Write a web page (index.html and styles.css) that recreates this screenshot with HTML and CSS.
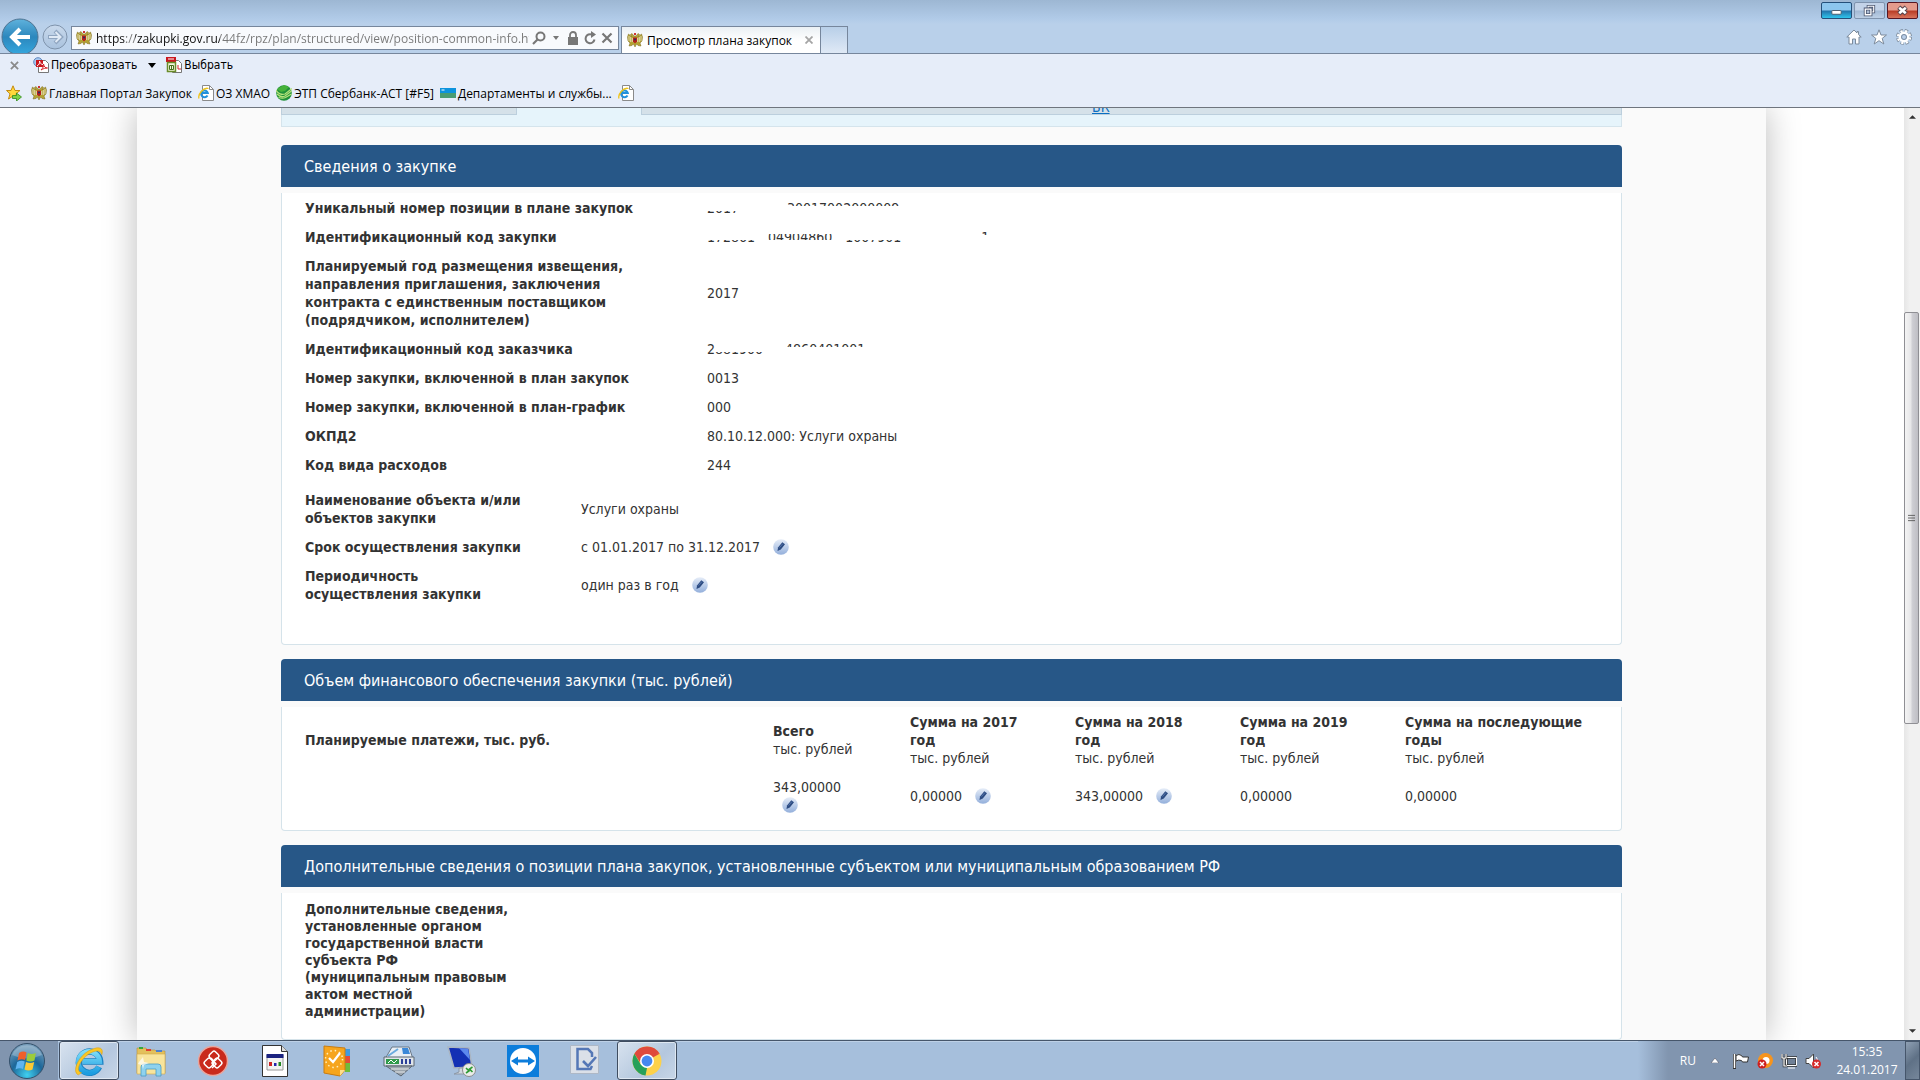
FILE: index.html
```html
<!DOCTYPE html>
<html lang="ru">
<head>
<meta charset="utf-8">
<title>Просмотр плана закупок</title>
<link rel="stylesheet" href="styles.css">
</head>
<body>
<svg class="defs" aria-hidden="true">
  <defs>
    <linearGradient id="gBack" x1="0" y1="0" x2="0" y2="1"><stop offset="0" stop-color="#5fb2dc"/><stop offset=".5" stop-color="#2c87bd"/><stop offset="1" stop-color="#35a8df"/></linearGradient>
    <linearGradient id="gFwd" x1="0" y1="0" x2="0" y2="1"><stop offset="0" stop-color="#c9d9ec"/><stop offset="1" stop-color="#a9c2de"/></linearGradient>
    <linearGradient id="gPen" x1="0" y1="0" x2="0" y2="1"><stop offset="0" stop-color="#e6edf8"/><stop offset="1" stop-color="#93afdb"/></linearGradient>
    <radialGradient id="gOrb" cx=".5" cy=".9" r=".9"><stop offset="0" stop-color="#3fd0f0"/><stop offset=".5" stop-color="#1c6799"/><stop offset="1" stop-color="#7fa3bf"/></radialGradient>
    <linearGradient id="gE" x1="0" y1="0" x2="0" y2="1"><stop offset="0" stop-color="#7fdcf8"/><stop offset="1" stop-color="#1d9de0"/></linearGradient>
    <symbol id="eagle" viewBox="0 0 16 16">
      <path d="M7 4 5 1.500 3.500 2.500 5 5 1.500 2 .5 5 1 9 3 11 2 14 5 13.500 6.500 12 8 15 9.500 12 11 13.500 14 14 13 11 15 9 15.500 5 14.500 2 11 5 12.500 2.500 11 1.500 9 4Z" fill="#b4a234" stroke="#7a681c" stroke-width=".5"/>
      <path d="M2 4v5M3.700 5v5M14 4v5M12.300 5v5M5.300 6v4M10.700 6v4" stroke="#fff" stroke-width=".6"/>
      <path d="M6 5.500h4v4L8 11.500 6 9.500Z" fill="#b3211c"/><path d="M7 1h2v2H7Z" fill="#c33"/><circle cx="8" cy="7.500" r="1" fill="#20306a"/>
    </symbol>
    <symbol id="iedoc" viewBox="0 0 16 16">
      <path d="M4.500.5h7l4 4v11h-11Z" fill="#fff" stroke="#8a8a8a"/><path d="M11.500.5v4h4" fill="none" stroke="#8a8a8a"/>
      <path d="M9.500 10.500A3.400 3.400 0 1 1 9.800 8H4" fill="none" stroke="#2191dc" stroke-width="2"/>
      <path d="M1 13.500C-.5 9 6 2 10.500 3.500" fill="none" stroke="#f0c419" stroke-width="1.300"/>
    </symbol>
    <symbol id="pen" viewBox="0 0 16 16">
      <circle cx="8" cy="8" r="7.800" fill="url(#gPen)"/><path d="M4.500 12 5 8.500 9.300 3.200 12 5.300 7.800 10.500Z" fill="#2d4c82"/><path d="M6.500 8.500 10 4.500" stroke="#5f7fb4" stroke-width=".8"/>
    </symbol>
    <symbol id="ie" viewBox="0 0 30 30">
      <path d="M24.500 20.500A10 10 0 1 1 25.500 15.500H9" fill="none" stroke="#1b83c4" stroke-width="6"/>
      <path d="M24 20.500A10 10 0 1 1 25 15.500H9" fill="none" stroke="url(#gE)" stroke-width="4.600"/>
      <path d="M5 28C-2 25 6 8 18 4 25 1 29 3 27 9 26 4 20 5 14 9 6 15 2 25 8 26Z" fill="#fbc724" stroke="#d99a10" stroke-width=".5"/>
    </symbol>
  </defs>
</svg>

<header class="frame">
  <div class="nav">
    <div class="history">
      <button class="back" aria-label="Назад"><svg viewBox="0 0 38 38"><circle cx="19" cy="19" r="18" fill="url(#gBack)" stroke="#4f7391"/><path d="M29 19H12M19 11l-8 8 8 8" fill="none" stroke="#fff" stroke-width="4"/></svg></button>
      <button class="forward" aria-label="Вперёд"><svg viewBox="0 0 26 26"><circle cx="13" cy="13" r="12" fill="url(#gFwd)" stroke="#7f93ab"/><path d="M6 13h12M13 7l6 6-6 6" fill="none" stroke="#8fa5c0" stroke-width="4"/><path d="M7 13h11M13.500 8l5 5-5 5" fill="none" stroke="#dfe9f5" stroke-width="2"/></svg></button>
    </div>
    <div class="address">
      <svg class="i16"><use href="#eagle"/></svg>
      <input class="url" aria-label="Адрес" value="https://zakupki.gov.ru/44fz/rpz/plan/structured/view/position-common-info.html">
      <button class="tool search" aria-label="Поиск"><svg viewBox="0 0 14 14"><circle cx="8.500" cy="5.500" r="4" fill="none" stroke="#777" stroke-width="2"/><path d="M5.500 8.500 1 13" stroke="#777" stroke-width="2.200"/></svg></button>
      <button class="tool caret" aria-label="Список адресов"><svg viewBox="0 0 8 5"><path d="M1 0h6L4 4Z" fill="#777"/></svg></button>
      <button class="tool" aria-label="Безопасность"><svg viewBox="0 0 14 14"><path d="M2 6h10v8H2Z" fill="#777"/><path d="M4 7V4a3 3 0 0 1 6 0v3" fill="none" stroke="#777" stroke-width="1.800"/></svg></button>
      <button class="tool" aria-label="Обновить"><svg viewBox="0 0 14 14"><path d="M11.500 8.500A4.500 4.500 0 1 1 9 3.600" fill="none" stroke="#777" stroke-width="2"/><path d="M8 0v7l5-3.500Z" fill="#777"/></svg></button>
      <button class="tool" aria-label="Остановить"><svg viewBox="0 0 14 14"><path d="M2.500 2.500l9 9M11.500 2.500l-9 9" stroke="#777" stroke-width="2.200"/></svg></button>
    </div>
    <div class="tab">
      <svg class="i16"><use href="#eagle"/></svg>
      <span class="tab-title">Просмотр плана закупок</span>
      <button class="tab-close" aria-label="Закрыть вкладку"><svg viewBox="0 0 8 8"><path d="M.5.5l7 7M7.500.5l-7 7" stroke="#a5a5a5" stroke-width="1.800"/></svg></button>
    </div>
    <button class="new-tab" aria-label="Новая вкладка"></button>
    <div class="corner">
      <div class="window-buttons">
        <button class="wb min" aria-label="Свернуть"><svg viewBox="0 0 30 16"><rect x="10" y="8" width="10" height="4" rx="1" fill="#fff" stroke="#4a5a6a"/></svg></button>
        <button class="wb max" aria-label="Восстановить"><svg viewBox="0 0 30 16"><path d="M13.500 3.500h6v6h-6Z" fill="none" stroke="#4c5770" stroke-width="3"/><path d="M13.500 3.500h6v6h-6Z" fill="none" stroke="#fff" stroke-width="1.200"/><path d="M10.500 6.500h6v6h-6Z" fill="#aebfd6" stroke="#4c5770" stroke-width="3.200"/><path d="M10.500 6.500h6v6h-6Z" fill="none" stroke="#fff" stroke-width="1.400"/></svg></button>
        <button class="wb close" aria-label="Закрыть"><svg viewBox="0 0 30 16"><path d="M11 4.500l8 7M19 4.500l-8 7" stroke="#55424a" stroke-width="5"/><path d="M11.500 5l7 6M18.500 5l-7 6" stroke="#fff" stroke-width="2.800"/></svg></button>
      </div>
      <div class="commands">
        <button class="tool" aria-label="Домой"><svg viewBox="0 0 16 16"><path d="M8 1 .8 8H3v7h3.500v-5h3v5H13V8h2.200l-2.700-2.500V2.500h-1.500v1.500Z" fill="#fff" stroke="#7c8b9c"/></svg></button>
        <button class="tool" aria-label="Избранное"><svg viewBox="0 0 16 16"><path d="M8 .8 10 6h5.500l-4.300 3.400L12.800 15 8 11.700 3.200 15l1.600-5.600L.5 6H6Z" fill="#fff" stroke="#7c8b9c"/></svg></button>
        <button class="tool" aria-label="Сервис"><svg viewBox="0 0 16 16"><circle cx="8" cy="8" r="6" fill="none" stroke="#7c8b9c" stroke-width="4" stroke-dasharray="3 1.712"/><circle cx="8" cy="8" r="6" fill="none" stroke="#fff" stroke-width="2.400" stroke-dasharray="2.200 2.512" stroke-dashoffset="-.4"/><circle cx="8" cy="8" r="4.200" fill="none" stroke="#fff" stroke-width="2.400"/><circle cx="8" cy="8" r="2.500" fill="#b9cfea" stroke="#7c8b9c"/></svg></button>
      </div>
    </div>
  </div>
  <div class="bar pdf-bar">
    <button class="bar-close" aria-label="Закрыть панель"><svg viewBox="0 0 10 10"><path d="M1 1l8 8M9 1 1 9" stroke="#8a8a8a" stroke-width="2"/></svg></button>
    <button class="bar-item"><svg class="i16" viewBox="0 0 16 16"><path d="M5.500 3.500h7l3 3v9h-10Z" fill="#fff" stroke="#777"/><circle cx="5" cy="5" r="4.300" fill="#a9c8ee" stroke="#5f88c0"/><path d="M3 3h7v7H3Z" fill="#c9171e"/><path d="M4 9c2-1 3-3 2.500-5 .5 2 1.500 3.500 3.500 3.500" fill="none" stroke="#fff"/><path d="M8 13c2-2 3-4 2.500-6 .5 3 2 4 4 4-2 0-4 .5-6.500 2Z" fill="none" stroke="#d8232a"/></svg>Преобразовать</button>
    <button class="bar-caret" aria-label="Параметры преобразования"><svg viewBox="0 0 8 5"><path d="M0 0h8L4 5Z" fill="#000"/></svg></button>
    <button class="bar-item"><svg class="i16" viewBox="0 0 16 16"><path d="M6.500 3.500h6l3 3v9h-9Z" fill="#fff" stroke="#777"/><path d="M0 0h10v5H0Z" fill="#c9171e"/><path d="M2 2h6" stroke="#fff"/><path d="M1.500 5.500h8v9h-8Z" fill="#f3f7dc" stroke="#6a8c2a" stroke-width="1.500"/><path d="M3.500 8.500h4v4h-4ZM5.500 8v5" fill="none" stroke="#47701c"/><path d="M12 8v4h3" fill="none" stroke="#d8232a"/></svg>Выбрать</button>
  </div>
  <nav class="bar fav-bar">
    <button class="add-fav" aria-label="Добавить в избранное"><svg class="i16" viewBox="0 0 16 16"><path d="M7 .8 9 5.500h5l-4 3.300 1.500 5L7 11 2.500 14 4 8.800 .5 5.500H5Z" fill="#ffd83d" stroke="#c48a10"/><path d="M6.500 10.500h4v-2.500l5 4-5 4v-2.500h-4Z" fill="#7ed348" stroke="#2f8a1c" stroke-width=".8"/></svg></button>
    <a class="fav" href="#"><svg class="i16"><use href="#eagle"/></svg>Главная Портал Закупок</a>
    <a class="fav" href="#"><svg class="i16"><use href="#iedoc"/></svg>ОЗ ХМАО</a>
    <a class="fav" href="#"><svg class="i16" viewBox="0 0 16 16"><circle cx="8" cy="8" r="7.800" fill="#21913a"/><path d="M0 5C2 9 6 10 9 9L16 3.500M1 9c3 3 6 3 8 2l6.500-5M2.500 12.500c3 1 5 1 7 0L15.500 9" fill="none" stroke="#b5e27a" stroke-width="1.200"/><path d="M1 4 5 7 9 6 13 2 8 0Z" fill="#46b23a"/></svg>ЭТП Сбербанк-АСТ [#F5]</a>
    <a class="fav" href="#"><svg class="i16" viewBox="0 0 16 16"><path d="M0 3h16v5H0Z" fill="#0d93dd"/><path d="M0 8h16v5H0Z" fill="#4a9c72"/><path d="M1.500 5h3" stroke="#fff" stroke-width="1"/></svg>Департаменты и службы...</a>
    <a class="fav" href="#" aria-label="Страница"><svg class="i16"><use href="#iedoc"/></svg></a>
  </nav>
</header>

<div class="viewport">
  <main class="page">
    <div class="sheet">
      <div class="tabs">
        <div class="tabs-row"><span class="tabs-left"></span><span class="tabs-active"></span><span class="tabs-right"><a class="tabs-link" href="#">БК</a></span></div>
        <div class="tabs-foot"></div>
      </div>

      <section class="panel">
        <h2 class="panel-title">Сведения о закупке</h2>
        <div class="panel-body roomy">
          <table class="facts wide">
            <tr><th scope="row">Уникальный номер позиции в плане закупок</th><td><span class="masked"><span class="low">2017</span><span class="gap-l"></span><span class="high">30017002000009</span></span></td></tr>
            <tr><th scope="row">Идентификационный код закупки</th><td><span class="masked"><span class="low">172861</span><span class="gap-s"></span><span class="mid">04904860</span><span class="gap-s"></span><span class="low">1007901</span><span class="gap-xl"></span><span class="high">1</span></span></td></tr>
            <tr><th scope="row">Планируемый год размещения извещения, направления приглашения, заключения контракта с единственным поставщиком (подрядчиком, исполнителем)</th><td>2017</td></tr>
            <tr><th scope="row">Идентификационный код заказчика</th><td><span class="masked"><span>2</span><span class="low">881900</span><span class="gap-m"></span><span class="high">4860401001</span></span></td></tr>
            <tr><th scope="row">Номер закупки, включенной в план закупок</th><td>0013</td></tr>
            <tr><th scope="row">Номер закупки, включенной в план-график</th><td>000</td></tr>
            <tr><th scope="row">ОКПД2</th><td>80.10.12.000: Услуги охраны</td></tr>
            <tr><th scope="row">Код вида расходов</th><td>244</td></tr>
          </table>
          <table class="facts narrow">
            <tr><th scope="row">Наименование объекта и/или объектов закупки</th><td>Услуги охраны</td></tr>
            <tr><th scope="row">Срок осуществления закупки</th><td>с 01.01.2017 по 31.12.2017 <button class="pen" aria-label="История изменений"><svg><use href="#pen"/></svg></button></td></tr>
            <tr><th scope="row">Периодичность осуществления закупки</th><td>один раз в год <button class="pen" aria-label="История изменений"><svg><use href="#pen"/></svg></button></td></tr>
          </table>
        </div>
      </section>

      <section class="panel">
        <h2 class="panel-title">Объем финансового обеспечения закупки (тыс. рублей)</h2>
        <div class="panel-body">
          <table class="facts sums">
            <thead>
              <tr><th class="c-name" scope="col">Планируемые платежи, тыс. руб.</th><th class="c-total" scope="col">Всего<small>тыс. рублей</small></th><th class="c-year" scope="col">Сумма на 2017 год<small>тыс. рублей</small></th><th class="c-year" scope="col">Сумма на 2018 год<small>тыс. рублей</small></th><th class="c-year" scope="col">Сумма на 2019 год<small>тыс. рублей</small></th><th class="c-rest" scope="col">Сумма на последующие годы<small>тыс. рублей</small></th></tr>
            </thead>
            <tbody>
              <tr><td></td><td>343,00000 <button class="pen" aria-label="История изменений"><svg><use href="#pen"/></svg></button></td><td>0,00000 <button class="pen" aria-label="История изменений"><svg><use href="#pen"/></svg></button></td><td>343,00000 <button class="pen" aria-label="История изменений"><svg><use href="#pen"/></svg></button></td><td>0,00000</td><td>0,00000</td></tr>
            </tbody>
          </table>
        </div>
      </section>

      <section class="panel">
        <h2 class="panel-title">Дополнительные сведения о позиции плана закупок, установленные субъектом или муниципальным образованием РФ</h2>
        <div class="panel-body">
          <table class="facts narrow dense">
            <tr><th scope="row">Дополнительные сведения, установленные органом государственной власти субъекта РФ (муниципальным правовым актом местной администрации)</th><td></td></tr>
          </table>
        </div>
      </section>
    </div>
  </main>
  <div class="scrollbar">
    <button class="sb-arrow" aria-label="Вверх"><svg viewBox="0 0 8 4"><path d="M0 4 4 0l4 4Z" fill="#333"/></svg></button>
    <div class="sb-before"></div>
    <div class="sb-thumb"><svg viewBox="0 0 8 8"><path d="M0 1h8M0 4h8M0 7h8" stroke="#555"/></svg></div>
    <div class="sb-after"></div>
    <button class="sb-arrow" aria-label="Вниз"><svg viewBox="0 0 8 4"><path d="M0 0h8L4 4Z" fill="#333"/></svg></button>
  </div>
</div>

<footer class="taskbar">
  <button class="start" aria-label="Пуск"><svg viewBox="0 0 38 38"><circle cx="19" cy="19" r="17.500" fill="url(#gOrb)" stroke="#34506a"/><path d="M4 13a16.500 16.500 0 0 1 30 0Q19 20 4 13Z" fill="#fff" opacity=".25"/><path d="M11 11q4-2.500 7.500-.5L17 18q-3.500-1.500-7.500.5Z" fill="#f0602a"/><path d="M19.800 11q3.700 2 8 0L26.500 18.500q-4 2-8.200 0Z" fill="#9bcc3c"/><path d="M9.200 20q4-2 7.500-.5L15 27q-3.500-1.500-7.500.5Z" fill="#5fb4f0"/><path d="M18 20q4 2 8.200 0L24.500 27.500q-4 2-8 0Z" fill="#fcc934"/></svg></button>
  <div class="apps">
    <button class="app active" aria-label="Internet Explorer"><svg><use href="#ie"/></svg></button>
    <button class="app" aria-label="Проводник"><svg viewBox="0 0 32 32"><path d="M2 6V3h9l1 2h8l1 1h9v22H2Z" fill="#e3c05c" stroke="#b8923a" stroke-width=".6"/><path d="M4 3h4" stroke="#35a83a" stroke-width="2"/><path d="M11 5h5" stroke="#e04030" stroke-width="2"/><path d="M21 6h6" stroke="#4a80d0" stroke-width="2"/><path d="M2 9h28v20H2Z" fill="#f8e49c" stroke="#d1a94a" stroke-width=".6"/><path d="M6 31V22q0-3 3-3h14q3 0 3 3v9h-5v-7H11v7Z" fill="#8fd2ee" stroke="#4a9cc4" stroke-width=".8"/><path d="M4 17l4-5 1 5 5 1-5 2-1 4-1-4-4-1Z" fill="#fff" opacity=".7"/></svg></button>
    <button class="app" aria-label="Программа"><svg viewBox="0 0 32 32"><circle cx="16" cy="16" r="14.500" fill="#c92a1c" stroke="#e8a69e" stroke-width="1.500"/><g fill="none" stroke="#fff" stroke-width="1.500"><rect x="13" y="7" width="8" height="8" rx="2" transform="rotate(45 17 11)"/><rect x="8" y="14" width="8" height="8" rx="2" transform="rotate(45 12 18)"/><rect x="16" y="14" width="8" height="8" rx="2" transform="rotate(45 20 18)"/><path d="M14 13l5 6-4 4"/></g></svg></button>
    <button class="app" aria-label="Документ"><svg viewBox="0 0 32 32"><path d="M3.500.5h19l6 6v25h-25Z" fill="#fff" stroke="#333"/><path d="M22.500.5v6h6" fill="#ddd" stroke="#333"/><path d="M8 10h16v15H8Z" fill="#f2f2f2" stroke="#999"/><path d="M7.500 9h17v4h-17Z" fill="#1b2380"/><path d="M10 17h3v4h-3Z" fill="#c22"/><path d="M15 18h2.500v3H15Z" fill="#22a"/><path d="M19.500 17h2.500v4h-2.500Z" fill="#282"/></svg></button>
    <button class="app" aria-label="Планировщик"><svg viewBox="0 0 32 32"><path d="M24 4h5v7h-5Z" fill="#3f9ae0"/><path d="M24 11h5v7h-5Z" fill="#e34b3a"/><path d="M24 18h5v9h-5Z" fill="#6fbc3c"/><path d="M3 1 24 3v22l-5 6L3 28Z" fill="#f6a51d" stroke="#c97c10"/><path d="M19 31v-6l5 0" fill="#ffdf8a"/><circle cx="13" cy="14" r="8.500" fill="none" stroke="#fff0c0" stroke-width="1.500" stroke-dasharray="1.500 3"/><path d="M8 13l4 4 7-9" fill="none" stroke="#fff" stroke-width="2.200"/></svg></button>
    <button class="app" aria-label="Учёт"><svg viewBox="0 0 32 32"><path d="M9 2h17l4 12H2Z" fill="#e8eef5" stroke="#6a7888"/><path d="M19 3h6l2 6h-7Z" fill="#3b88d8"/><path d="M5 11 15 4" stroke="#6aaade" stroke-width="2"/><path d="M1 12h30v9H1Z" fill="#dfe5ea" stroke="#5c6772"/><path d="M3 14h13v5H3Z" fill="#2f9a4a"/><path d="M5 18l3-3 3 3 3-3" fill="none" stroke="#fff"/><path d="M19 14v5M23 14v5M27 14v5" stroke="#2a3f98" stroke-width="2"/><path d="M3 21h26L18 31Z" fill="#9ca5ae" stroke="#5c6772"/><path d="M8 24h18M12 27h10" stroke="#e5e8ea"/></svg></button>
    <button class="app" aria-label="Удалённый рабочий стол"><svg viewBox="0 0 32 32"><path d="M3 2l21 1 3 19-18 1Z" fill="#1330b4" stroke="#aab5c2" stroke-width="1.500"/><path d="M14 3l9 1 2 11Z" fill="#5c88ee"/><path d="M14 23h6v4l2 2H9l5-2Z" fill="#cfd6de" stroke="#8c98a6"/><circle cx="24" cy="25" r="6.500" fill="#e9ece9" stroke="#8c8c8c"/><path d="M21 28l3-2-3-3M27.500 22l-3 2 3 3" fill="none" stroke="#2c9a32" stroke-width="1.600"/></svg></button>
    <button class="app" aria-label="TeamViewer"><svg viewBox="0 0 32 32"><path d="M0 0h32v32H0Z" fill="#0c7ddb"/><circle cx="16" cy="16" r="13" fill="#fff"/><path d="M4 16l7-4.500v3h10v-3l7 4.500-7 4.500v-3H11v3Z" fill="#0c7ddb"/></svg></button>
    <button class="app" aria-label="Задачи"><svg viewBox="0 0 32 32"><path d="M1.500 .5h28v28h-28Z" fill="#dbe0e8" stroke="#aeb8c6"/><path d="M23 12V8l-4-4H8.500v20h13L23 21" fill="none" stroke="#5577b6" stroke-width="2.500"/><path d="M14 16l5 5 8-9" fill="none" stroke="#5577b6" stroke-width="2.600"/></svg></button>
    <button class="app active" aria-label="Google Chrome"><svg viewBox="0 0 32 32"><circle cx="16" cy="16" r="14.500" fill="#fdd14b"/><path d="M3.400 8.800A14.500 14.500 0 0 1 28.600 8.800L16 9.500 9.500 18Z" fill="#df4a3c"/><path d="M3.400 8.800 9.800 19.500 16 23 14.500 30.400A14.500 14.500 0 0 1 3.400 8.800Z" fill="#27a05a"/><path d="M28.600 8.800H16v7Z" fill="#df4a3c"/><circle cx="16" cy="16" r="7" fill="#fff"/><circle cx="16" cy="16" r="5.400" fill="#4688f0"/></svg></button>
  </div>
  <div class="tray">
    <span class="lang">RU</span>
    <button class="tray-up" aria-label="Скрытые значки"><svg viewBox="0 0 8 5"><path d="M0 5 4 0l4 5Z" fill="#fff" stroke="#445" stroke-width=".5"/></svg></button>
    <svg class="i16" viewBox="0 0 16 16"><path d="M1.500 1v15" stroke="#333" stroke-width="3"/><path d="M3 2.500q3-2 5.500 0l1 1.500h6l-1 5h-5l-1-1.500q-3-1-5.500.5Z" fill="#fff" stroke="#333"/><path d="M1.500 1v14" stroke="#fff" stroke-width="1.500"/></svg>
    <svg class="i16" viewBox="0 0 16 16"><circle cx="8.500" cy="7.500" r="7.500" fill="#f7941d"/><circle cx="9" cy="7.500" r="3.500" fill="#fff"/><circle cx="5" cy="11" r="4.500" fill="#cf1f1f"/><path d="M3 9l4 4M7 9l-4 4" stroke="#fff" stroke-width="1.500"/></svg>
    <svg class="i16" viewBox="0 0 16 16"><path d="M5.500 4.500h10v8h-10Z" fill="#6f8096" stroke="#333" stroke-width="2.500"/><path d="M5.500 4.500h10v8h-10ZM7 15h7" fill="none" stroke="#fff"/><path d="M1 1v4h4V1M3 5v8h3" fill="none" stroke="#333" stroke-width="2.500"/><path d="M1 1v4h4V1M3 5v8h3" fill="none" stroke="#fff" stroke-width="1.200"/></svg>
    <svg class="i16" viewBox="0 0 16 16"><path d="M1 5.500h3L8.500 1v14L4 10.500H1Z" fill="#fff" stroke="#444"/><path d="M11 4q2 2 1 4" fill="none" stroke="#fff"/><circle cx="11.500" cy="11" r="4.500" fill="#d62a2a"/><path d="M9.500 9l4 4M13.500 9l-4 4" stroke="#fff" stroke-width="1.500"/></svg>
    <time class="clock"><span>15:35</span><span>24.01.2017</span></time>
  </div>
  <button class="show-desktop" aria-label="Свернуть все окна"></button>
</footer>
</body>
</html>
```
FILE: styles.css
```css
* { box-sizing: border-box; }

body {
  margin: 0;
  height: 100vh;
  display: flex;
  flex-direction: column;
  overflow: hidden;
  background: #fff;
  font-family: "Open Sans", "Noto Sans", sans-serif;
  font-size: 12px;
  color: #000;
}

button {
  margin: 0;
  padding: 0;
  border: 0;
  background: none;
  font: inherit;
  color: inherit;
}

svg { display: block; }
.defs { position: absolute; width: 0; height: 0; }
.i16 { width: 16px; height: 16px; flex: none; }

/* Browser frame */
.frame {
  flex: none;
  background: #e6edf9;
  border-bottom: 1px solid #6f757e;
}

.nav {
  display: flex;
  align-items: flex-end;
  height: 54px;
  background: linear-gradient(#9db7d3, #b0cae7 18px, #b9d0ea 24px);
  border-bottom: 1px solid #76869c;
}

.history {
  display: flex;
  align-items: flex-start;
  gap: 3px;
  width: 71px;
  height: 35px;
  padding-left: 1px;
  overflow: hidden;
}
.back svg { width: 38px; height: 38px; }
.forward { padding-top: 6px; }
.forward svg { width: 26px; height: 26px; }

.address {
  display: flex;
  align-items: center;
  gap: 3px;
  width: 548px;
  height: 24px;
  margin-bottom: 3px;
  padding: 0 4px;
  background: #f8fafd;
  border: 1px solid #76869c;
}
.url {
  flex: 1;
  min-width: 0;
  margin-left: 1px;
  padding: 0;
  border: 0;
  outline: 0;
  font: inherit;
  color: transparent;
  background: linear-gradient(90deg, #111 29px, #777 29px, #777 39px, #111 39px, #111 124px, #777 124px);
  -webkit-background-clip: text;
  background-clip: text;
}
.tool svg { width: 16px; height: 16px; }
.address .tool svg { width: 14px; height: 14px; }
.address .caret svg { width: 8px; height: 5px; }
.address .caret { margin: 0 3px; }

.tab {
  display: flex;
  align-items: center;
  gap: 4px;
  width: 200px;
  height: 27px;
  margin-left: 2px;
  padding: 0 7px 0 5px;
  background: linear-gradient(#eaf0f4, #fff 14px);
  border: 1px solid #76869c;
  border-bottom: 0;
}
.tab-title { flex: 1; white-space: nowrap; }
.tab-close svg { width: 8px; height: 8px; }
.new-tab {
  width: 27px;
  height: 27px;
  background: linear-gradient(#b8cfe8, #dfe9f6);
  border: 1px solid #76869c;
  border-width: 1px 1px 0 0;
}

.corner {
  display: flex;
  flex-direction: column;
  align-items: flex-end;
  align-self: stretch;
  justify-content: space-between;
  margin-left: auto;
  padding: 2px 2px 8px 0;
}
.window-buttons { display: flex; gap: 2px; }
.wb {
  width: 31px;
  height: 17px;
  border: 1px solid #566b82;
  border-radius: 2px;
}
.wb svg { width: 29px; height: 15px; }
.wb.min { background: linear-gradient(#8cc6ee 7px, #2374ac 8px, #2fc4ec); border-color: #24507a; }
.wb.max { background: linear-gradient(#c3d3e8 7px, #a2b9d5 8px, #bccfe5); border-color: #7f93ad; }
.wb.close { background: linear-gradient(#e49b8c 7px, #b93c25 8px, #d8745c); border-color: #571723; }
.commands { display: flex; gap: 9px; padding-right: 6px; }

.bar {
  display: flex;
  align-items: center;
  white-space: nowrap;
}
.pdf-bar {
  height: 22px;
  padding-left: 10px;
  font-family: "DejaVu Sans Condensed", "DejaVu Sans", sans-serif;
}
.bar-close svg { width: 9px; height: 9px; }
.bar-item {
  display: flex;
  align-items: center;
  gap: 2px;
}
.bar-close + .bar-item { margin-left: 14px; }
.bar-caret { margin: 0 10px 0 11px; }
.bar-caret svg { width: 8px; height: 5px; }

.fav-bar { height: 31px; gap: 6px; padding: 3px 0 0 6px; }
.add-fav { margin-right: 3px; }
.fav {
  display: flex;
  align-items: center;
  gap: 2px;
  color: inherit;
  text-decoration: none;
}

/* Page area */
.viewport {
  flex: 1;
  min-height: 0;
  display: flex;
}
.page {
  flex: 1;
  min-width: 0;
  overflow: hidden;
  background: #fff;
  padding: 0 138px 0 137px;
}
.sheet {
  padding: 0 144px;
  min-height: 100%;
  background: #fafafa;
  box-shadow: 0 0 32px #bbb;
  font-family: "DejaVu Sans Condensed", "DejaVu Sans", sans-serif;
  font-size: 14px;
  line-height: 18px;
  color: #333;
}

.tabs { margin-bottom: 18px; }
.tabs-row { display: flex; height: 7px; overflow: hidden; }
.tabs-left { width: 236px; }
.tabs-active { width: 124px; background: #e6f4fb; }
.tabs-right { flex: 1; padding-left: 450px; }
.tabs-left, .tabs-right {
  background: #d5e1e9;
  border: 1px solid #bccfdd;
  border-top: 0;
}
.tabs-link {
  display: block;
  margin-top: -10px;
  color: #0a6fc2;
}
.tabs-foot {
  height: 12px;
  background: #e6f4fb;
  border: 1px solid #d5e4ec;
  border-top: 0;
}

.panel { margin-bottom: 14px; }
.panel-title {
  margin: 0 0 6px;
  padding: 13px 23px 11px;
  background: #275787;
  border-radius: 4px 4px 0 0;
  color: #fff;
  font-size: 16px;
  font-weight: 400;
  line-height: 18px;
}
.panel-body {
  background: #fff;
  border: 1px solid #d5e3ea;
  border-top: 0;
  border-radius: 0 0 4px 4px;
  padding: 0 0 11px 23px;
}
.panel-body.roomy { padding-bottom: 36px; }

.facts { width: 100%; border-collapse: collapse; table-layout: fixed; }
.facts th, .facts td {
  padding: 6px 0 5px;
  text-align: left;
  vertical-align: middle;
}
.facts.wide th { width: 402px; padding-right: 60px; }
.facts.narrow { margin-top: 6px; }
.facts.narrow th { width: 276px; padding-right: 46px; }
.facts.dense { margin: 0; line-height: 17px; }
.facts.dense th { padding: 8px 58px 8px 0; }
.sums .c-name { width: 468px; }
.sums .c-total { width: 137px; }
.sums .c-year { width: 165px; }
.facts.sums th, .facts.sums td { padding-right: 50px; }
.facts.sums th.c-rest { padding-right: 20px; }
.sums small { display: block; font-size: 14px; font-weight: 400; }

.pen { margin-left: 9px; vertical-align: -3px; }
.pen svg { width: 16px; height: 16px; }

/* Numbers that are partly blanked out */
.masked { display: flex; }
.low { clip-path: inset(12px 0 2px); }
.high { clip-path: inset(2px 0 11px); }
.mid { clip-path: inset(6px 0 6px); }
.gap-s { width: 13px; }
.gap-m { width: 22px; }
.gap-l { width: 48px; }
.gap-xl { width: 80px; }

/* Scrollbar */
.scrollbar {
  display: flex;
  flex-direction: column;
  width: 16px;
  background: linear-gradient(90deg, #e6e6e6, #f1f1f1 6px);
}
.sb-arrow {
  display: flex;
  align-items: center;
  justify-content: center;
  height: 17px;
}
.sb-arrow svg { width: 7px; height: 4px; }
.sb-before { flex: 187; }
.sb-after { flex: 300; }
.sb-thumb {
  flex: 411;
  display: flex;
  align-items: center;
  justify-content: center;
  margin-right: 1px;
  background: linear-gradient(90deg, #f4f4f4, #e6e6e8 6px, #cfcfd4 7px, #bebec4);
  border: 1px solid #8f8f94;
  border-radius: 2px;
}
.sb-thumb svg { width: 7px; height: 8px; }

/* Taskbar */
.taskbar {
  flex: none;
  display: flex;
  height: 40px;
  background: #a6bfdc;
  border-top: 1px solid #46566b;
  box-shadow: inset 0 1px #bdd0e6;
}
.start {
  width: 58px;
  padding-left: 8px;
  background: #8195af;
}
.start svg { width: 38px; height: 38px; }
.apps { display: flex; gap: 2px; padding-left: 1px; }
.app {
  display: flex;
  align-items: center;
  justify-content: center;
  width: 60px;
}
.app svg { width: 32px; height: 32px; }
.app.active {
  background: linear-gradient(135deg, #d8e3ef, #b4c7de 60%, #c7d6e7);
  border: 1px solid #3f4d60;
  border-radius: 3px;
  box-shadow: inset 0 0 0 1px #dfe8f2;
}
.tray {
  display: flex;
  align-items: center;
  gap: 8px;
  margin-left: auto;
  padding-left: 42px;
  background: linear-gradient(90deg, #a6bfdc, #8195af 30px);
  color: #fff;
}
.lang { margin-right: 7px; }
.tray-up { margin-right: 6px; }
.tray-up svg { width: 8px; height: 5px; }
.clock {
  display: flex;
  flex-direction: column;
  align-items: center;
  width: 76px;
  line-height: 18px;
}
.show-desktop {
  width: 15px;
  background: linear-gradient(135deg, #8fa0b4, #5f7186 50%, #76879b);
  border: 1px solid #46566b;
}
```
